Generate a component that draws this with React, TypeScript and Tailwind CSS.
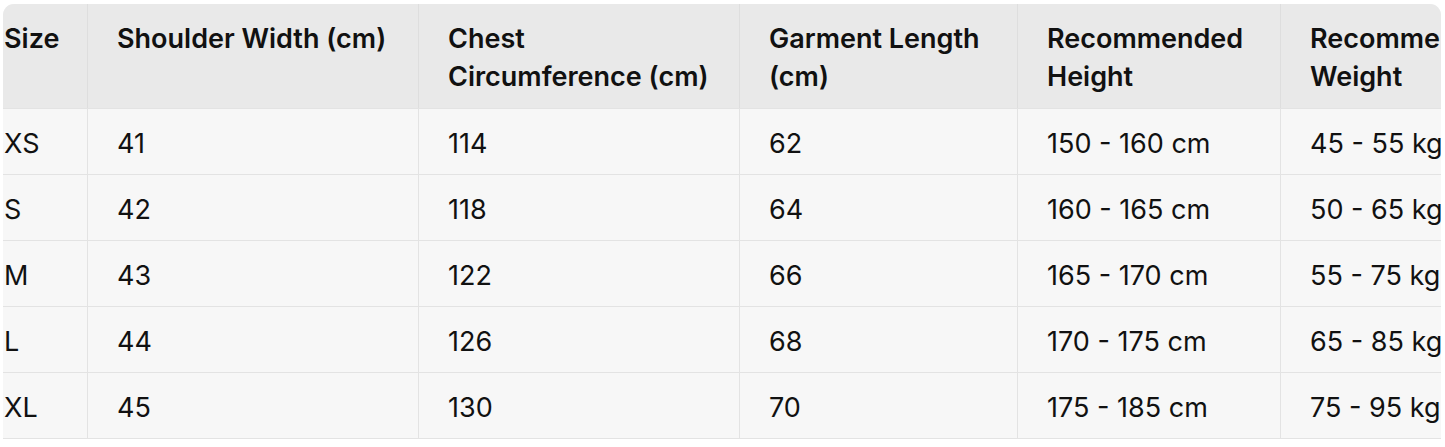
import React from "react";

const headers = [
  ["Size"],
  ["Shoulder Width (cm)"],
  ["Chest", "Circumference (cm)"],
  ["Garment Length", "(cm)"],
  ["Recommended", "Height"],
  ["Recommended", "Weight"],
];

const rows = [
  ["XS", "41", "114", "62", "150 - 160 cm", "45 - 55 kg"],
  ["S", "42", "118", "64", "160 - 165 cm", "50 - 65 kg"],
  ["M", "43", "122", "66", "165 - 170 cm", "55 - 75 kg"],
  ["L", "44", "126", "68", "170 - 175 cm", "65 - 85 kg"],
  ["XL", "45", "130", "70", "175 - 185 cm", "75 - 95 kg"],
];

export default function App() {
  return (
    <div className="w-[1445px] h-[447px] bg-white pt-[4px] pl-[3px] overflow-hidden" style={{ fontFamily: "Inter, 'Noto Sans', sans-serif" }}>
      <div className="w-[1438px] overflow-hidden rounded-t-[11px] text-[#111] bg-[#f7f7f7] border-b border-[#e3e3e3]">
        <div className="grid grid-cols-[84px_331px_321px_278px_263px_300px] w-max">
          {headers.map((h, i) => (
            <div
              key={i}
              className={`h-[104px] bg-[#e9e9e9] flex flex-col justify-start pt-[16px] text-[27px] leading-[38px] font-semibold ${i === 0 ? "pl-[1px]" : "pl-[29px] border-l border-[#dedede]"}`}
            >
              {h.map((t, j) => (
                <span key={j} className="whitespace-nowrap">{t}</span>
              ))}
            </div>
          ))}
          {rows.map((r, ri) =>
            r.map((c, ci) => (
              <div
                key={`${ri}-${ci}`}
                className={`h-[66px] flex items-center border-t border-[#e3e3e3] text-[27px] pt-[5px] whitespace-nowrap ${ci === 0 ? "pl-[1px]" : "pl-[29px] border-l border-[#e3e3e3]"}`}
              >
                {c}
              </div>
            ))
          )}
        </div>
      </div>
    </div>
  );
}
